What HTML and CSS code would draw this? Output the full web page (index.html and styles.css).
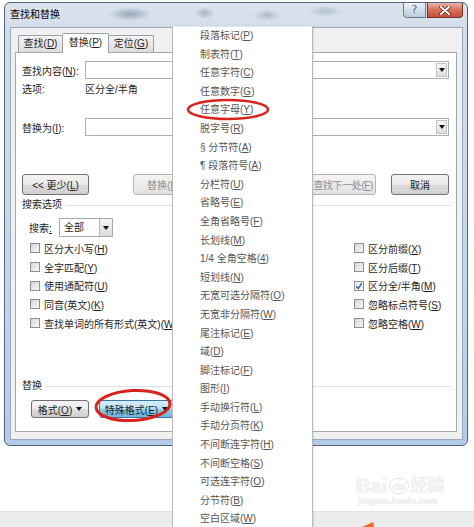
FILE: index.html
```html
<!DOCTYPE html>
<html lang="zh-CN">
<head>
<meta charset="utf-8">
<title>查找和替换</title>
<link rel="stylesheet" href="styles.css">
</head>
<body>
<div class="screen">
  <div class="dialog">
    <div class="titlebar">
      <span class="title">查找和替换</span>
      <div class="caption">
        <span class="cap-help">?</span>
        <span class="cap-close"><svg width="12" height="9" viewBox="0 0 12 9"><path d="M2 1 L10 8 M10 1 L2 8" stroke="#5a1a12" stroke-width="3.4" stroke-linecap="round"/><path d="M2 1 L10 8 M10 1 L2 8" stroke="#fff" stroke-width="2" stroke-linecap="round"/></svg></span>
      </div>
    </div>
    <div class="client">
      <div class="tabs">
        <span class="tab tab1">查找(<u>D</u>)</span>
        <span class="tab active">替换(<u>P</u>)</span>
        <span class="tab tab3">定位(<u>G</u>)</span>
      </div>
      <div class="panel">
        <div class="find-row">
          <span class="lbl">查找内容(<u>N</u>):</span>
          <div class="combo"><span class="combo-arrow"><i class="tri"></i></span></div>
        </div>
        <div class="opts-row">
          <span class="lbl">选项:</span>
          <span>区分全/半角</span>
        </div>
        <div class="repl-row">
          <span class="lbl">替换为(<u>I</u>):</span>
          <div class="combo"><span class="combo-arrow"><i class="tri"></i></span></div>
        </div>
        <div class="btn-row">
          <span class="btn b-less"><span>&lt;&lt; 更少(<u>L</u>)</span></span>
          <span class="btn disabled b-repl"><span>替换(<u>R</u>)</span></span>
          <span class="btn b-all"></span>
          <span class="btn disabled b-next"><span>查找下一处(<u>F</u>)</span></span>
          <span class="btn b-cancel"><span>取消</span></span>
        </div>
        <div class="group-head gh-search"><span>搜索选项</span><i class="rule"></i></div>
        <div class="search-row">
          <span class="s-lbl">搜索<u>:</u></span>
          <div class="select"><span class="sel-text">全部</span><span class="sel-arrow"><i class="tri"></i></span></div>
        </div>
        <div class="checks">
          <div class="col col-left">
            <div class="chk"><i class="box"></i><span>区分大小写(<u>H</u>)</span></div>
            <div class="chk"><i class="box"></i><span>全字匹配(<u>Y</u>)</span></div>
            <div class="chk"><i class="box"></i><span>使用通配符(<u>U</u>)</span></div>
            <div class="chk"><i class="box"></i><span>同音(英文)(<u>K</u>)</span></div>
            <div class="chk"><i class="box"></i><span>查找单词的所有形式(英文)(<u>W</u>)</span></div>
          </div>
          <div class="col col-right">
            <div class="chk"><i class="box"></i><span>区分前缀(<u>X</u>)</span></div>
            <div class="chk"><i class="box"></i><span>区分后缀(<u>T</u>)</span></div>
            <div class="chk"><i class="box checked"><svg width="8" height="8" viewBox="0 0 8 8"><path d="M1.2 4.2 L3.2 6.6 L6.8 1.2" fill="none" stroke="#2d5fa6" stroke-width="1.4"/></svg></i><span>区分全/半角(<u>M</u>)</span></div>
            <div class="chk"><i class="box"></i><span>忽略标点符号(<u>S</u>)</span></div>
            <div class="chk"><i class="box"></i><span>忽略空格(<u>W</u>)</span></div>
          </div>
        </div>
        <div class="group-head gh-repl"><span>替换</span><i class="rule"></i></div>
        <div class="fmt-row">
          <span class="btn b-fmt"><span>格式(<u>O</u>)</span><i class="tri"></i></span>
          <span class="btn b-special"><span>特殊格式(<u>E</u>)</span><i class="tri"></i></span>
        </div>
      </div>
    </div>
  </div>
  <div class="gap"></div>
  <div class="band"><svg class="orange" width="14" height="8" viewBox="0 0 14 8"><path d="M1 8 L12 3 L13 8 Z" fill="#f26b21"/></svg></div>

  <div class="menu">
    <div class="mi">段落标记(<u>P</u>)</div>
    <div class="mi">制表符(<u>T</u>)</div>
    <div class="mi">任意字符(<u>C</u>)</div>
    <div class="mi">任意数字(<u>G</u>)</div>
    <div class="mi">任意字母(<u>Y</u>)</div>
    <div class="mi">脱字号(<u>R</u>)</div>
    <div class="mi">§ 分节符(<u>A</u>)</div>
    <div class="mi">¶ 段落符号(<u>A</u>)</div>
    <div class="mi">分栏符(<u>U</u>)</div>
    <div class="mi">省略号(<u>E</u>)</div>
    <div class="mi">全角省略号(<u>F</u>)</div>
    <div class="mi">长划线(<u>M</u>)</div>
    <div class="mi">1/4 全角空格(<u>4</u>)</div>
    <div class="mi">短划线(<u>N</u>)</div>
    <div class="mi">无宽可选分隔符(<u>O</u>)</div>
    <div class="mi">无宽非分隔符(<u>W</u>)</div>
    <div class="mi">尾注标记(<u>E</u>)</div>
    <div class="mi">域(<u>D</u>)</div>
    <div class="mi">脚注标记(<u>F</u>)</div>
    <div class="mi">图形(<u>I</u>)</div>
    <div class="mi">手动换行符(<u>L</u>)</div>
    <div class="mi">手动分页符(<u>K</u>)</div>
    <div class="mi">不间断连字符(<u>H</u>)</div>
    <div class="mi">不间断空格(<u>S</u>)</div>
    <div class="mi">可选连字符(<u>O</u>)</div>
    <div class="mi">分节符(<u>B</u>)</div>
    <div class="mi">空白区域(<u>W</u>)</div>
  </div>

  <div class="watermark">
    <div class="wm-top"><span class="wm-bai">Bai</span><span class="wm-du">du</span><span class="wm-jy">经验</span></div>
    <div class="wm-url">jingyan.baidu.com</div>
  </div>

  <svg class="marks" width="474" height="527" viewBox="0 0 474 527">
    <ellipse cx="228" cy="109.5" rx="40" ry="9.5" fill="none" stroke="#d8231f" stroke-width="2.6"/>
    <ellipse cx="133" cy="405.5" rx="37" ry="15" fill="none" stroke="#d8231f" stroke-width="3" transform="rotate(-3 133 405.5)"/>
  </svg>
</div>
</body>
</html>
```
FILE: styles.css
```css
* { box-sizing: border-box; }
html, body { margin: 0; padding: 0; }
body {
  width: 474px;
  height: 527px;
  overflow: hidden;
  background: #fff;
  font-family: "Liberation Sans", "Noto Sans CJK SC", sans-serif;
  font-size: 10px;
  color: #1e1e1e;
}
u { text-decoration: underline; text-underline-offset: 1px; }
.screen {
  width: 474px;
  height: 527px;
  display: flex;
  flex-direction: column;
  position: relative;
  overflow: hidden;
}

/* dialog frame */
.dialog {
  flex: none;
  margin: 2px 0 0 4px;
  width: 464px;
  height: 444px;
  border: 1px solid #4f6580;
  border-radius: 6px;
  background:
    radial-gradient(ellipse 22px 7px at 125px 11px, rgba(70,95,130,0.45), transparent),
    radial-gradient(ellipse 10px 6px at 200px 10px, rgba(70,95,130,0.35), transparent),
    radial-gradient(ellipse 14px 6px at 262px 12px, rgba(70,95,130,0.3), transparent),
    radial-gradient(ellipse 18px 6px at 320px 8px, rgba(70,95,130,0.25), transparent),
    linear-gradient(180deg, #dce4ed 0, #d3dde9 26px, #c4d6ea 60%, #b3cce8 100%);
  padding: 0 4px 5px 5px;
  display: flex;
  flex-direction: column;
}
.titlebar {
  height: 24px;
  flex: none;
  display: flex;
  justify-content: space-between;
  align-items: flex-start;
}
.title { line-height: 24px; font-size: 10px; color: #000; }
.caption { display: flex; gap: 1px; }
.cap-help {
  width: 23px;
  height: 15px;
  border: 1px solid #6d7f95;
  border-top: none;
  border-radius: 0 0 0 4px;
  background: linear-gradient(#eef3f8, #d3dde9 50%, #bccbdc);
  color: #56667b;
  font-size: 11px;
  line-height: 14px;
  text-align: center;
  font-family: "DejaVu Sans", sans-serif;
}
.cap-close {
  width: 36px;
  height: 15px;
  border: 1px solid #6d2c24;
  border-top: none;
  border-radius: 0 0 4px 0;
  background: linear-gradient(#eab3a6, #d5705c 50%, #c8503a);
  display: flex;
  align-items: center;
  justify-content: center;
}

.client {
  flex: 1;
  background: #f0f0f0;
  border: 1px solid #97a9bf;
  padding: 5px 5px 7px 4px;
  display: flex;
  flex-direction: column;
}
.tabs {
  height: 19px;
  flex: none;
  display: flex;
  align-items: flex-end;
  padding-left: 3px;
}
.tab {
  height: 17px;
  border: 1px solid #9a9fa6;
  border-bottom: none;
  background: linear-gradient(#f5f5f5, #e8e8e8 50%, #dcdcdc);
  line-height: 16px;
  text-align: center;
  font-size: 10px;
  border-radius: 2px 2px 0 0;
}
.tab1 { width: 44px; border-right: none; }
.tab3 { width: 45px; border-left: none; }
.tab.active {
  width: 47px;
  height: 20px;
  margin-bottom: -1px;
  background: #fff;
  position: relative;
  z-index: 1;
  line-height: 18px;
}

.panel {
  flex: 1;
  background: #fff;
  border: 1px solid #a2a7ae;
  padding: 0 7px 0 6px;
  display: flex;
  flex-direction: column;
}
.lbl { width: 63px; flex: none; }
.find-row, .repl-row { height: 18px; display: flex; align-items: center; }
.find-row { margin-top: 8px; }
.opts-row { margin-top: 4px; height: 14px; line-height: 14px; display: flex; }
.repl-row { margin-top: 21px; }
.combo {
  flex: 1;
  height: 18px;
  border: 1px solid #abb0b8;
  background: #fff;
  display: flex;
  justify-content: flex-end;
  padding: 1px;
}
.combo-arrow {
  width: 11px;
  height: 100%;
  background: linear-gradient(#f6f6f6, #dddddd);
  border: 1px solid #c4c4c4;
  display: flex;
  align-items: center;
  justify-content: center;
}
.tri {
  display: inline-block;
  width: 0;
  height: 0;
  border-left: 3px solid transparent;
  border-right: 3px solid transparent;
  border-top: 4px solid #111;
}

.btn-row {
  margin-top: 38px;
  height: 21px;
  display: flex;
  gap: 15px;
}
.btn {
  height: 21px;
  flex: none;
  border: 1px solid #707070;
  border-radius: 3px;
  background: linear-gradient(#f3f3f3 0, #ebebeb 48%, #dddddd 52%, #cfcfcf 100%);
  display: flex;
  align-items: center;
  justify-content: center;
  font-size: 10px;
  color: #222;
  white-space: nowrap;
}
.btn .tri { margin-left: 4px; }
.btn.disabled { border-color: #b1b5b9; color: #8c8c8c; background: linear-gradient(#f4f4f4, #ececec 50%, #e2e2e2); }
.b-less { width: 67px; margin-right: 29px; }
.b-repl { width: 67px; justify-content: flex-start; padding-left: 13px; }
.b-all { width: 78px; }
.b-next { width: 68px; justify-content: flex-end; padding-right: 2px; }
.b-next span { letter-spacing: -0.4px; }
.b-cancel { width: 58px; }

.group-head {
  height: 14px;
  line-height: 14px;
  display: flex;
  align-items: center;
  margin-right: -2px;
}
.group-head .rule { flex: 1; height: 1px; background: #dde3ea; margin-left: 4px; }
.gh-search { margin-top: 3px; }
.gh-repl { margin-top: 47px; }

.search-row {
  margin-top: 6px;
  height: 19px;
  display: flex;
  align-items: center;
  padding-left: 7px;
}
.s-lbl { width: 30px; flex: none; }
.select {
  width: 54px;
  height: 19px;
  border: 1px solid #a5a9ae;
  background: #fff;
  display: flex;
}
.sel-text { flex: 1; padding-left: 4px; line-height: 17px; }
.sel-arrow {
  width: 13px;
  border-left: 1px solid #b5b5b5;
  background: linear-gradient(#f5f5f5, #dadada);
  display: flex;
  align-items: center;
  justify-content: center;
}

.checks {
  margin-top: 2px;
  display: grid;
  grid-template-columns: 332px 1fr;
}
.col-left { padding-left: 8px; }
.chk { height: 18.7px; display: flex; align-items: center; gap: 4px; white-space: nowrap; }
.box {
  width: 10px;
  height: 10px;
  flex: none;
  border: 1px solid #8e8f8f;
  background: linear-gradient(135deg, #d6d6d6, #f7f7f7);
  display: flex;
  align-items: center;
  justify-content: center;
}
.box.checked { background: linear-gradient(135deg, #e8e8e8, #fbfbfb); }

.fmt-row {
  margin-top: 7px;
  height: 18px;
  display: flex;
  gap: 10px;
  padding-left: 9px;
}
.fmt-row .btn { height: 18px; }
.b-fmt { width: 58px; }
.b-special {
  width: 75px;
  border-color: #3b77a8;
  background: linear-gradient(#d8eefb 0, #b8e0f5 48%, #8fcbeb 52%, #6fb6de 100%);
}

.gap { flex: 1; }
.band {
  height: 16px;
  flex: none;
  background: #ececec;
  border-top: 1px solid #e2e2e2;
  display: flex;
  align-items: flex-end;
  padding-left: 361px;
}
.orange { display: block; }

/* popup menu */
.menu {
  position: absolute;
  left: 172px;
  top: 26px;
  width: 141px;
  height: 503px;
  background: #fff;
  border: 1px solid #b8b8b8;
  border-top-color: #e6e6e6;
  box-shadow: 1px 0 2px rgba(0,0,0,0.08);
  z-index: 5;
}
.mi {
  height: 18.6px;
  line-height: 18.6px;
  padding-left: 27px;
  font-size: 10px;
  color: #555;
  white-space: nowrap;
}

.watermark {
  position: absolute;
  left: 356px;
  top: 472px;
  width: 92px;
  color: #f3f3f3;
  text-shadow: 0 0 1px #d6d6d6;
  z-index: 2;
}
.wm-top { display: flex; align-items: flex-end; height: 24px; }
.wm-bai { font-size: 20px; font-weight: bold; line-height: 20px; }
.wm-du {
  font-size: 11px;
  font-weight: bold;
  width: 20px;
  height: 16px;
  border-radius: 8px;
  border: 1px solid #e2e2e2;
  text-align: center;
  line-height: 14px;
  margin: 0 1px 2px 2px;
}
.wm-jy { font-size: 17px; font-weight: bold; line-height: 20px; }
.wm-url { font-size: 9px; line-height: 11px; font-weight: bold; padding-left: 2px; }

.marks {
  position: absolute;
  left: 0;
  top: 0;
  z-index: 10;
  pointer-events: none;
}
```
